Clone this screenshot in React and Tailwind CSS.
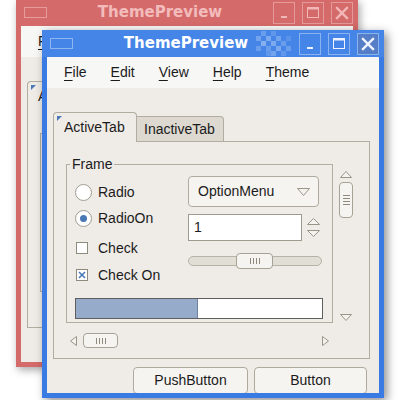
import React from "react";

const SANS = "font-['Liberation_Sans',Arial,sans-serif]";
const LINE = "border-[#b3ada1]";

function Tri({ dir = "down", w = 12, h = 7, className = "" }) {
  const pts = {
    down: `0.5,0.5 ${w - 0.5},0.5 ${w / 2},${h - 0.5}`,
    up: `0.5,${h - 0.5} ${w - 0.5},${h - 0.5} ${w / 2},0.5`,
    left: `${w - 0.5},0.5 ${w - 0.5},${h - 0.5} 0.5,${h / 2}`,
    right: `0.5,0.5 0.5,${h - 0.5} ${w - 0.5},${h / 2}`,
  }[dir];
  return (
    <svg width={w} height={h} className={className}>
      <polygon points={pts} fill="#f4f2ee" stroke="#9a9588" strokeWidth="1" />
    </svg>
  );
}

function WinButton({ kind, active }) {
  const ink = active ? "#eef3ff" : "#f2b6b6";
  const frame = active ? "border-[#8cb2f0]" : "border-[#e49a9a]";
  const fill = kind === "close" && active ? "bg-[#567ec6]" : "";
  return (
    <div className={`w-[22px] h-[22px] border ${frame} ${fill} flex items-center justify-center`}>
      <svg width="20" height="20">
        {kind === "min" && <rect x="7" y="13" width="6" height="2" fill={ink} />}
        {kind === "max" && (
          <g>
            <rect x="4.5" y="4.5" width="11" height="10" fill="none" stroke={ink} />
            <rect x="4" y="4" width="12" height="2.5" fill={ink} />
          </g>
        )}
        {kind === "close" && (
          <g stroke={ink} strokeWidth="2.4" strokeLinecap="square">
            <line x1="5" y1="5" x2="15" y2="15" />
            <line x1="15" y1="5" x2="5" y2="15" />
          </g>
        )}
      </svg>
    </div>
  );
}

function Checker() {
  const cells = [
    [0, 1, 0.25], [1, 0, 0.2], [2, 1, 0.3], [3, 0, 0.15], [1, 2, 0.35], [2, 3, 0.2],
    [3, 2, 0.3], [4, 1, 0.25], [5, 2, 0.2], [4, 3, 0.3], [5, 4, 0.15], [3, 4, 0.25],
    [6, 3, 0.2], [0, 3, 0.2], [2, 4, 0.15], [6, 1, 0.12],
  ];
  return (
    <svg width="36" height="25" className="absolute left-[214px] top-[1px]">
      {cells.map(([c, r, o], i) => (
        <rect key={i} x={c * 5} y={r * 5} width="5" height="5" fill="#ffffff" opacity={o} />
      ))}
    </svg>
  );
}

function TitleBar({ active }) {
  return (
    <div
      className={`relative flex items-center h-[27px] pl-[8px] pr-[5px] shrink-0 ${
        active ? "bg-[#4585e7]" : "bg-[#d46a6a]"
      }`}
    >
      <div className={`w-[23px] h-[11px] border ${active ? "border-[#8fb5f1]" : "border-[#e79c9c]"}`} />
      {active && <Checker />}
      <div
        className={`relative flex-1 text-center font-bold text-[15px] font-['DejaVu_Sans',sans-serif] ${
          active ? "text-white" : "text-[#f3bcbc]"
        }`}
      >
        ThemePreview
      </div>
      <div className="relative flex gap-[7px]">
        <WinButton kind="min" active={active} />
        <WinButton kind="max" active={active} />
        <WinButton kind="close" active={active} />
      </div>
    </div>
  );
}

function Radio({ on, label }) {
  return (
    <div className="flex items-center h-[26px]">
      <div className="w-[17px] h-[17px] rounded-full bg-white border border-[#a29d91] flex items-center justify-center">
        {on && <div className="w-[7px] h-[7px] rounded-full bg-[#4a78b6]" />}
      </div>
      <span className="ml-[6px]">{label}</span>
    </div>
  );
}

function Check({ on, label }) {
  return (
    <div className="flex items-center h-[26px]">
      <div className="ml-[1px] w-[12px] h-[12px] bg-white border border-[#8f8a7e] flex items-center justify-center">
        {on && (
          <svg width="8" height="8">
            <g stroke="#4a78b6" strokeWidth="1.6">
              <line x1="1" y1="1" x2="7" y2="7" />
              <line x1="7" y1="1" x2="1" y2="7" />
            </g>
          </svg>
        )}
      </div>
      <span className="ml-[10px]">{label}</span>
    </div>
  );
}

function Grip({ vertical }) {
  return (
    <div className={`flex ${vertical ? "flex-col gap-[2px]" : "gap-[2px]"}`}>
      {[0, 1, 2, 3].map((i) => (
        <div key={i} className={vertical ? "w-[7px] h-px bg-[#8f8a7e]" : "w-px h-[6px] bg-[#8f8a7e]"} />
      ))}
    </div>
  );
}

function Frame() {
  return (
    <div className={`relative w-[267px] h-[159px] border ${LINE} pl-[8px] pt-[11px]`}>
      <span className="absolute left-[3px] top-[-10px] px-[2px] bg-[#efebe7] leading-[18px]">Frame</span>
      <div className="flex">
        <div className="w-[113px] pt-[3px]">
          <Radio label="Radio" />
          <Radio on label="RadioOn" />
          <div className="mt-[4px]">
            <Check label="Check" />
          </div>
          <div className="mt-[1px]">
            <Check on label="Check On" />
          </div>
        </div>
        <div className="w-[134px]">
          <div className="h-[31px] w-[131px] rounded-[4px] border border-[#b0aa9e] bg-[#f6f4f1] flex items-center justify-between pl-[9px] pr-[8px]">
            <span>OptionMenu</span>
            <Tri dir="down" w={13} h={8} />
          </div>
          <div className="mt-[7px] flex items-center">
            <div className="w-[114px] h-[27px] bg-white border border-[#9f9a8e] flex items-center pl-[5px]">1</div>
            <div className="ml-[5px] flex flex-col gap-[5px]">
              <Tri dir="up" w={13} h={7} />
              <Tri dir="down" w={13} h={7} />
            </div>
          </div>
          <div className="relative mt-[12px] h-[16px] flex items-center">
            <div className="w-[135px] h-[10px] rounded-full bg-[#e1ded5] border border-[#b8b3a7]" />
            <div className="absolute left-[48px] top-0 w-[37px] h-[16px] rounded-[4px] bg-[#f6f4f1] border border-[#a8a296] flex items-center justify-center">
              <Grip />
            </div>
          </div>
        </div>
      </div>
      <div className="mt-[10px] w-[248px] h-[21px] border border-[#5f5f5f] bg-white flex">
        <div className="w-[122px] h-full bg-[#96abc9] border-r border-[#6f819c]" />
      </div>
    </div>
  );
}

function Content() {
  return (
    <div className={`flex-1 flex flex-col bg-[#efebe7] text-[14px] text-[#1b1b1b] ${SANS}`}>
      <div className="h-[31px] shrink-0 bg-[#f7f7f6] flex items-center pl-[17px] gap-[24px]">
        {["File", "Edit", "View", "Help", "Theme"].map((m) => (
          <span key={m}>
            <span className="underline underline-offset-[3px]">{m[0]}</span>
            {m.slice(1)}
          </span>
        ))}
      </div>
      <div className="flex flex-col pt-[24px] pl-[6px]">
        <div className="flex items-end h-[29px]">
          <div className={`relative z-10 h-[30px] -mb-px w-[84px] rounded-t-[4px] border border-b-0 ${LINE} bg-[#efebe7] flex items-center pl-[10px]`}>
            <svg width="5" height="5" className="absolute left-[3px] top-[3px]">
              <polygon points="0,0 5,0 0,5" fill="#4a78b6" />
            </svg>
            ActiveTab
          </div>
          <div className={`h-[25px] w-[88px] -ml-px rounded-tr-[4px] border border-b-0 ${LINE} bg-[#ddd9d0] flex items-center pl-[7px]`}>
            InactiveTab
          </div>
        </div>
        <div className={`w-[317px] h-[218px] border ${LINE} flex`}>
          <div className="flex flex-col pl-[12px] pt-[22px]">
            <Frame />
            <div className="mt-[10px] ml-[4px] flex items-center h-[15px]">
              <Tri dir="left" w={7} h={10} />
              <div className="ml-[6px] w-[35px] h-[15px] rounded-[4px] bg-[#f6f4f1] border border-[#a8a296] flex items-center justify-center">
                <Grip />
              </div>
              <div className="ml-[204px]">
                <Tri dir="right" w={7} h={10} />
              </div>
            </div>
          </div>
          <div className="ml-[6px] pt-[29px] flex flex-col items-center w-[14px]">
            <Tri dir="up" w={12} h={7} />
            <div className="mt-[4px] w-[14px] h-[36px] rounded-[4px] bg-[#f6f4f1] border border-[#a8a296] flex items-center justify-center">
              <Grip vertical />
            </div>
            <div className="mt-[96px]">
              <Tri dir="down" w={12} h={7} />
            </div>
          </div>
        </div>
        <div className="mt-[8px] flex justify-end gap-[6px] pr-[12px]">
          <div className="w-[115px] h-[27px] rounded-[4px] border border-[#b0aa9e] bg-[#f6f4f1] flex items-center justify-center">
            PushButton
          </div>
          <div className="w-[113px] h-[27px] rounded-[4px] border border-[#b0aa9e] bg-[#f6f4f1] flex items-center justify-center">
            Button
          </div>
        </div>
      </div>
    </div>
  );
}

function Window({ active, className }) {
  return (
    <div className={`absolute flex flex-col overflow-hidden ${className}`}>
      <TitleBar active={active} />
      <div
        className={`flex-1 flex border-x-[5px] border-b-[5px] overflow-hidden ${
          active ? "border-[#3a7be3]" : "border-[#d46a6a]"
        }`}
      >
        <Content />
      </div>
    </div>
  );
}

export default function App() {
  return (
    <div className="relative w-[400px] h-[400px] bg-white overflow-hidden">
      <Window
        className="z-0 left-[16px] top-[-1px] w-[342px] h-[368px] shadow-[2px_3px_8px_rgba(0,0,0,0.35)]"
      />
      <Window
        active
        className="z-10 left-[42px] top-[30px] w-[342px] h-[368px] shadow-[3px_3px_9px_rgba(0,0,0,0.45)]"
      />
    </div>
  );
}
